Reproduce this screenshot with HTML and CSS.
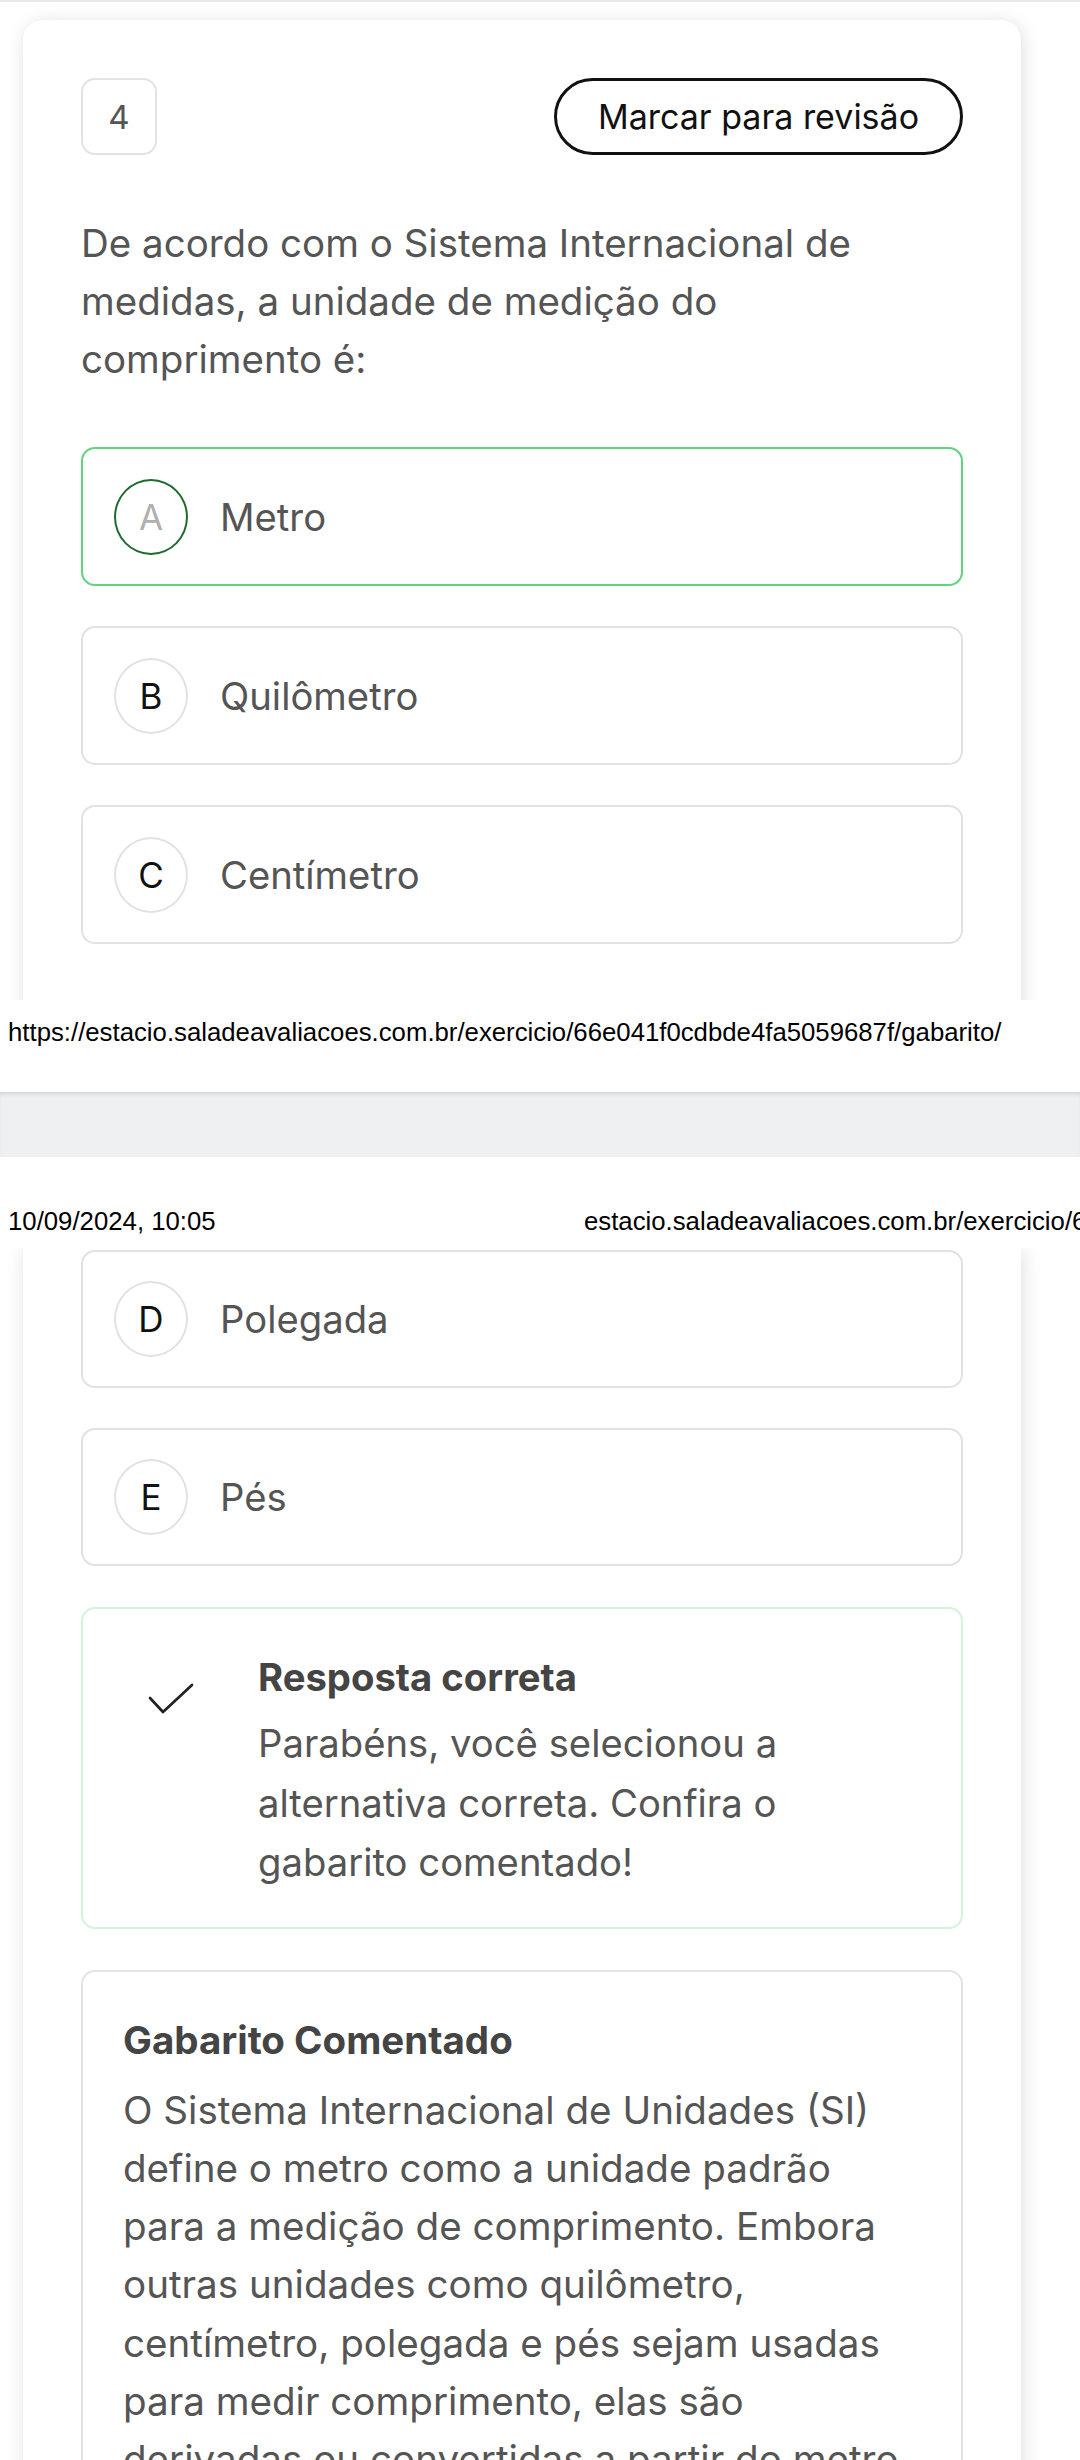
FILE: index.html
```html
<!DOCTYPE html>
<html lang="pt-BR">
<head>
<meta charset="utf-8">
<title>Exercício</title>
<link rel="stylesheet" href="styles.css">
</head>
<body>
<div class="topline"></div>
<section class="sheet sheet-1">
  <div class="print-area area-1">
    <div class="card card-1">
      <div class="q-header">
        <div class="q-number">4</div>
        <button class="review-btn">Marcar para revisão</button>
      </div>
      <p class="question">De acordo com o Sistema Internacional de medidas, a unidade de medição do comprimento é:</p>
      <div class="options">
        <div class="option selected"><span class="letter">A</span><span class="opt-text">Metro</span></div>
        <div class="option"><span class="letter">B</span><span class="opt-text">Quilômetro</span></div>
        <div class="option"><span class="letter">C</span><span class="opt-text">Centímetro</span></div>
      </div>
    </div>
  </div>
  <div class="print-footer">https://estacio.saladeavaliacoes.com.br/exercicio/66e041f0cdbde4fa5059687f/gabarito/</div>
</section>
<div class="sheet-gap"></div>
<section class="sheet sheet-2">
  <div class="print-header">
    <span class="ph-date">10/09/2024, 10:05</span>
    <span class="ph-title">estacio.saladeavaliacoes.com.br/exercicio/66e041f0cdbde4fa5059687f/gabarito/</span>
  </div>
  <div class="print-area area-2">
    <div class="card card-2">
      <div class="options">
        <div class="option"><span class="letter">D</span><span class="opt-text">Polegada</span></div>
        <div class="option"><span class="letter">E</span><span class="opt-text">Pés</span></div>
      </div>
      <div class="result-box">
        <div class="check-wrap">
          <svg class="check" width="46" height="32" viewBox="0 0 46 32" aria-hidden="true"><path d="M2 15 L15 29 L44 2" fill="none" stroke="#222" stroke-width="2.7" stroke-linecap="round" stroke-linejoin="round"/></svg>
        </div>
        <div class="result-text">
          <h3 class="result-title">Resposta correta</h3>
          <p class="result-body">Parabéns, você selecionou a alternativa correta. Confira o gabarito comentado!</p>
        </div>
      </div>
      <div class="answer-box">
        <h3 class="answer-title">Gabarito Comentado</h3>
        <p class="answer-body">O Sistema Internacional de Unidades (SI) define o metro como a unidade padrão para a medição de comprimento. Embora outras unidades como quilômetro, centímetro, polegada e pés sejam usadas para medir comprimento, elas são derivadas ou convertidas a partir do metro, que é a unidade base do SI para medir comprimento.</p>
      </div>
    </div>
  </div>
</section>
</body>
</html>
```
FILE: styles.css
```css
* { box-sizing: border-box; }
html, body { margin: 0; padding: 0; }
body {
  width: 1080px;
  height: 2460px;
  overflow: hidden;
  background: #ffffff;
  font-family: Inter, "Noto Sans", sans-serif;
  color: #555555;
}
.topline { height: 2px; background: #e9e9e9; }
.sheet { background: #ffffff; }
.sheet-1 { height: 1090px; }
.print-area { overflow: hidden; padding-left: 23px; padding-right: 59px; }
.area-1 { height: 998px; padding-top: 18px; }
.area-2 { height: 1212px; }
.card {
  width: 998px;
  background: #ffffff;
  box-shadow: 2px 2px 18px rgba(0, 0, 0, 0.13);
  padding: 0 58px;
}
.card-1 { border-radius: 20px 20px 0 0; padding-top: 58px; padding-bottom: 200px; }
.card-2 { padding-top: 2px; padding-bottom: 400px; }
.q-header { display: flex; justify-content: space-between; align-items: center; height: 77px; }
.q-number {
  width: 76px; height: 77px;
  border: 2px solid #e3e3e3; border-radius: 14px;
  display: flex; align-items: center; justify-content: center;
  font-size: 33px; color: #555;
}
.review-btn {
  width: 409px; height: 77px;
  border: 3.5px solid #111; border-radius: 40px;
  background: #fff; color: #111;
  font-family: Inter, "Noto Sans", sans-serif;
  font-size: 34px;
  padding: 0;
}
.question {
  margin: 59px 0 0;
  font-size: 38.5px; line-height: 58px;
  color: #555;
}
.options { display: flex; flex-direction: column; gap: 40px; }
.card-1 .options { margin-top: 59px; }
.option {
  height: 139px;
  border: 2px solid #e2e2e2; border-radius: 14px;
  display: flex; align-items: center;
  padding-left: 31px; gap: 32px;
}
.card-2 .option { height: 138px; }
.option.selected { border-color: #5fd47c; }
.letter {
  width: 74px; height: 76px; flex: none;
  border: 2px solid #e2e2e2; border-radius: 50%;
  display: flex; align-items: center; justify-content: center;
  font-size: 35px; color: #111;
}
.option.selected .letter { border-color: #1e6a2f; color: #b0b0b0; }
.opt-text { font-size: 38.25px; color: #555; }
.result-box {
  margin-top: 41px;
  border: 2px solid #d2f4da; border-radius: 14px;
  display: flex;
  padding: 39px 36px 34px 36px;
}
.check-wrap { width: 139px; flex: none; padding-left: 29px; padding-top: 35px; }
.check { display: block; }
.result-text { flex: 1; }
.result-title { margin: 0; font-size: 38.25px; line-height: 59px; font-weight: 700; color: #444; }
.result-body { margin: 7px 0 0; font-size: 38.25px; line-height: 59.5px; color: #555; }
.answer-box {
  margin-top: 41px;
  border: 2px solid #e4e4e4; border-radius: 14px;
  padding: 39px 46px 40px 40px;
}
.answer-title { margin: 0; font-size: 38.5px; line-height: 58px; font-weight: 700; color: #444; }
.answer-body { margin: 12px 0 0; font-size: 38.6px; line-height: 58.3px; color: #555; }
.print-footer, .print-header {
  font-family: "Liberation Sans", Arial, sans-serif;
  font-size: 25.75px; line-height: 30px; color: #000;
  white-space: nowrap;
}
.print-footer { padding: 17px 0 0 8px; }
.sheet-gap {
  height: 65px; background: #eff0f2;
  box-shadow: inset 0 4px 4px -2px rgba(0, 0, 0, 0.12);
}
.sheet-2 { height: 1303px; }
.print-header { display: flex; padding: 49px 0 0 8px; height: 91px; overflow: hidden; }
.ph-date { width: 576px; flex: none; }
.ph-title { flex: none; }
```
